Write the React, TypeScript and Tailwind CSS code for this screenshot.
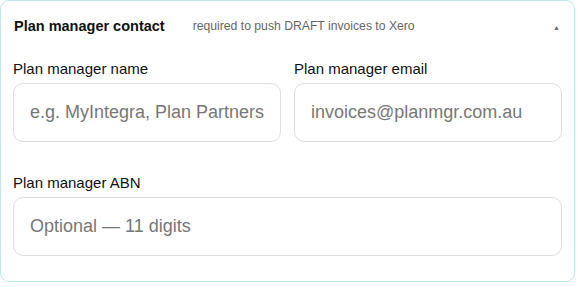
import React from "react";

const font = { fontFamily: '"Liberation Sans", Arial, sans-serif' };

function Field({ label, placeholder }: { label: string; placeholder: string }) {
  return (
    <div className="flex flex-col">
      <label className="text-[15px] leading-[17px] text-[#111] mb-[6px]">{label}</label>
      <input
        className="h-[59px] w-full rounded-[10px] border border-[#dedede] bg-white px-4 text-[18px] text-[#333] placeholder:text-[#777] outline-none"
        placeholder={placeholder}
        style={font}
      />
    </div>
  );
}

export default function App() {
  return (
    <div className="w-[577px] h-[287px] bg-white" style={font}>
      <div className="w-[575px] h-[282px] rounded-[9px] border border-[#bfe8ea] bg-white px-3 pt-[17px]">
        <div className="flex items-center h-[17px]">
          <span className="text-[14.5px] font-bold text-[#111] leading-[17px] ml-[1px]">Plan manager contact</span>
          <span className="ml-[28px] text-[12.2px] text-[#666] leading-[17px]">required to push DRAFT invoices to Xero</span>
          <span className="ml-auto mr-[2px] text-[7px] text-[#666] leading-none mt-[1px]">▲</span>
        </div>
        <div className="mt-[25px] grid grid-cols-2 gap-x-[13px] gap-y-[32px]">
          <Field label="Plan manager name" placeholder="e.g. MyIntegra, Plan Partners" />
          <Field label="Plan manager email" placeholder="invoices@planmgr.com.au" />
          <div className="col-span-2">
            <Field label="Plan manager ABN" placeholder="Optional — 11 digits" />
          </div>
        </div>
      </div>
    </div>
  );
}
